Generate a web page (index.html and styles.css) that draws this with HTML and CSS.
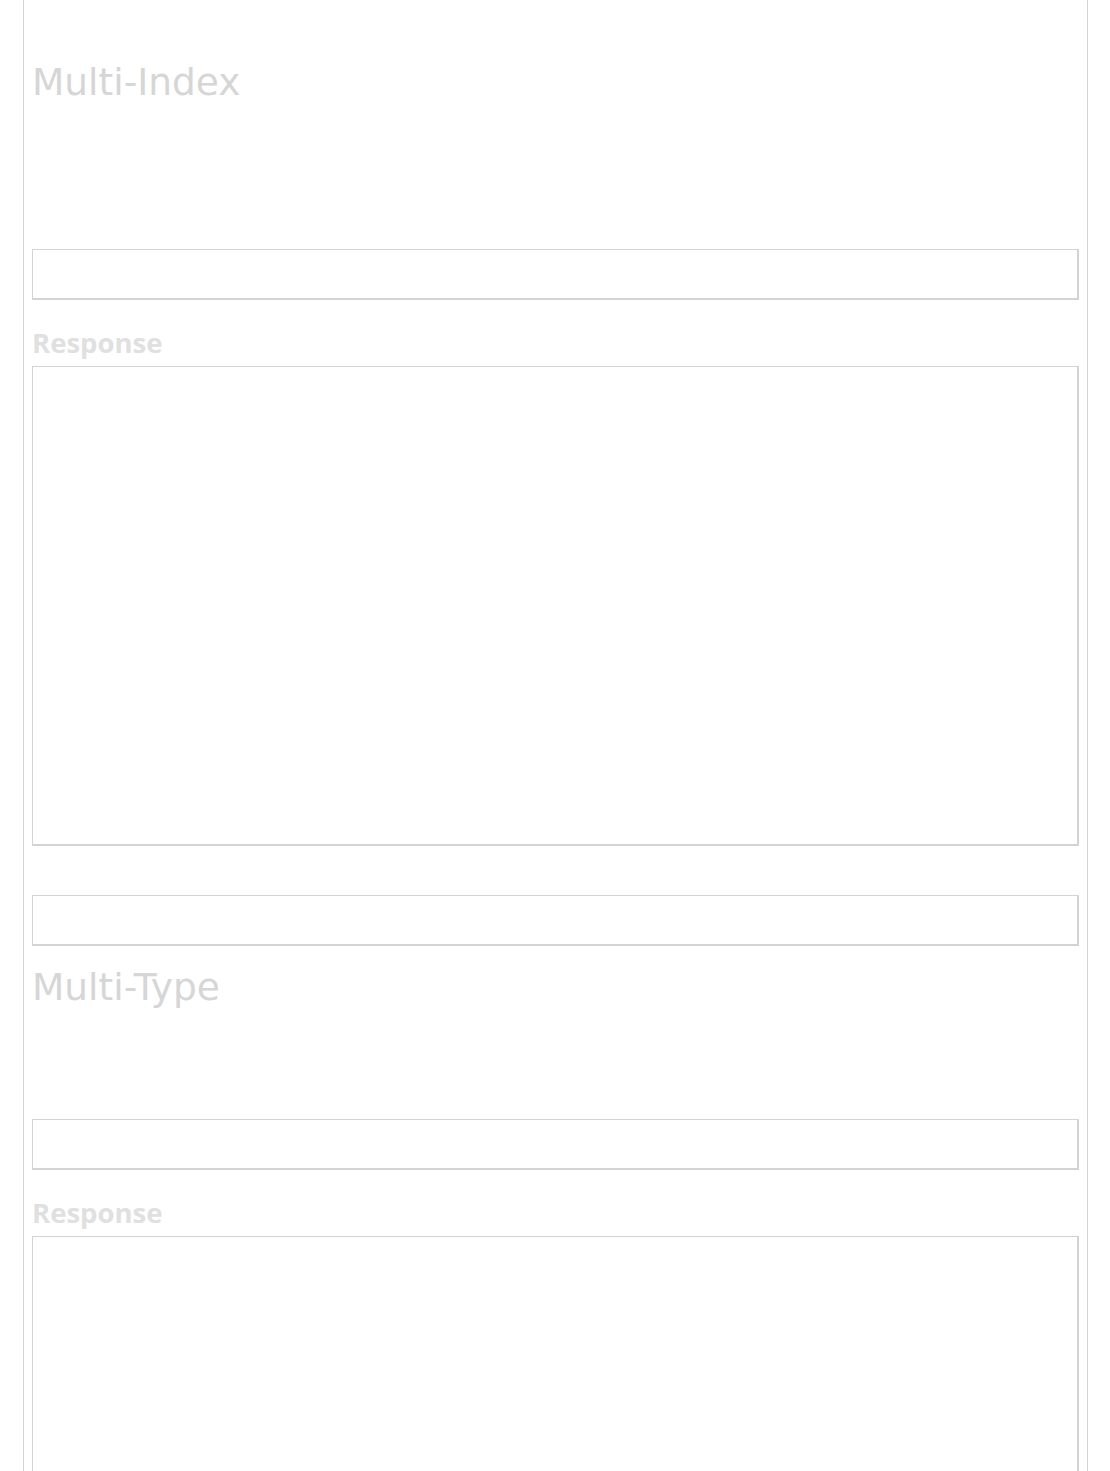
FILE: index.html
```html
<!DOCTYPE html>
<html lang="en">
<head>
  <meta charset="UTF-8">
  <title>Multi-Index / Multi-Type</title>
  <link rel="stylesheet" href="styles.css">
</head>
<body>
  <div class="wrap">
    <section class="block block-index">
      <h2>Multi-Index</h2>
      <input type="text" class="query">
      <label class="resp-label">Response</label>
      <textarea class="response"></textarea>
      <input type="text" class="query extra">
    </section>

    <section class="block block-type">
      <h2>Multi-Type</h2>
      <input type="text" class="query">
      <label class="resp-label">Response</label>
      <textarea class="response"></textarea>
    </section>
  </div>
</body>
</html>
```

FILE: styles.css
```css
body {
  margin: 0;
  padding: 0;
  background: #fff;
  font-family: 'DejaVu Sans', Verdana, sans-serif;
}
.wrap {
  box-sizing: border-box;
  width: 1065px;
  min-height: 1600px;
  margin-left: 23px;
  padding: 61px 8px 0 8px;
  border-left: 1px solid #d3d3d3;
  border-right: 1px solid #d3d3d3;
}
.block {
  display: flex;
  flex-direction: column;
}
.block h2 {
  margin: 0;
  font-size: 37.5px;
  line-height: 42px;
  font-weight: normal;
  color: #d6d6d6;
}
.query {
  box-sizing: border-box;
  width: 100%;
  height: 51px;
  margin: 0;
  border-style: solid;
  border-color: #d3d3d3;
  border-width: 1px 2px 2px 1px;
  background: #fff;
}
.block-index .query {
  margin-top: 146px;
}
.block-index .query.extra {
  margin-top: 49px;
}
.block-type {
  margin-top: 20px;
}
.block-type .query {
  margin-top: 111px;
}
.resp-label {
  margin-top: 25px;
  font-family: 'Open Sans', sans-serif;
  font-weight: bold;
  font-size: 27.5px;
  line-height: 36px;
  color: #e0e0e0;
}
.response {
  box-sizing: border-box;
  width: 100%;
  height: 480px;
  margin: 5px 0 0 0;
  border-style: solid;
  border-color: #d3d3d3;
  border-width: 1px 2px 2px 1px;
  resize: none;
  background: #fff;
}
```
